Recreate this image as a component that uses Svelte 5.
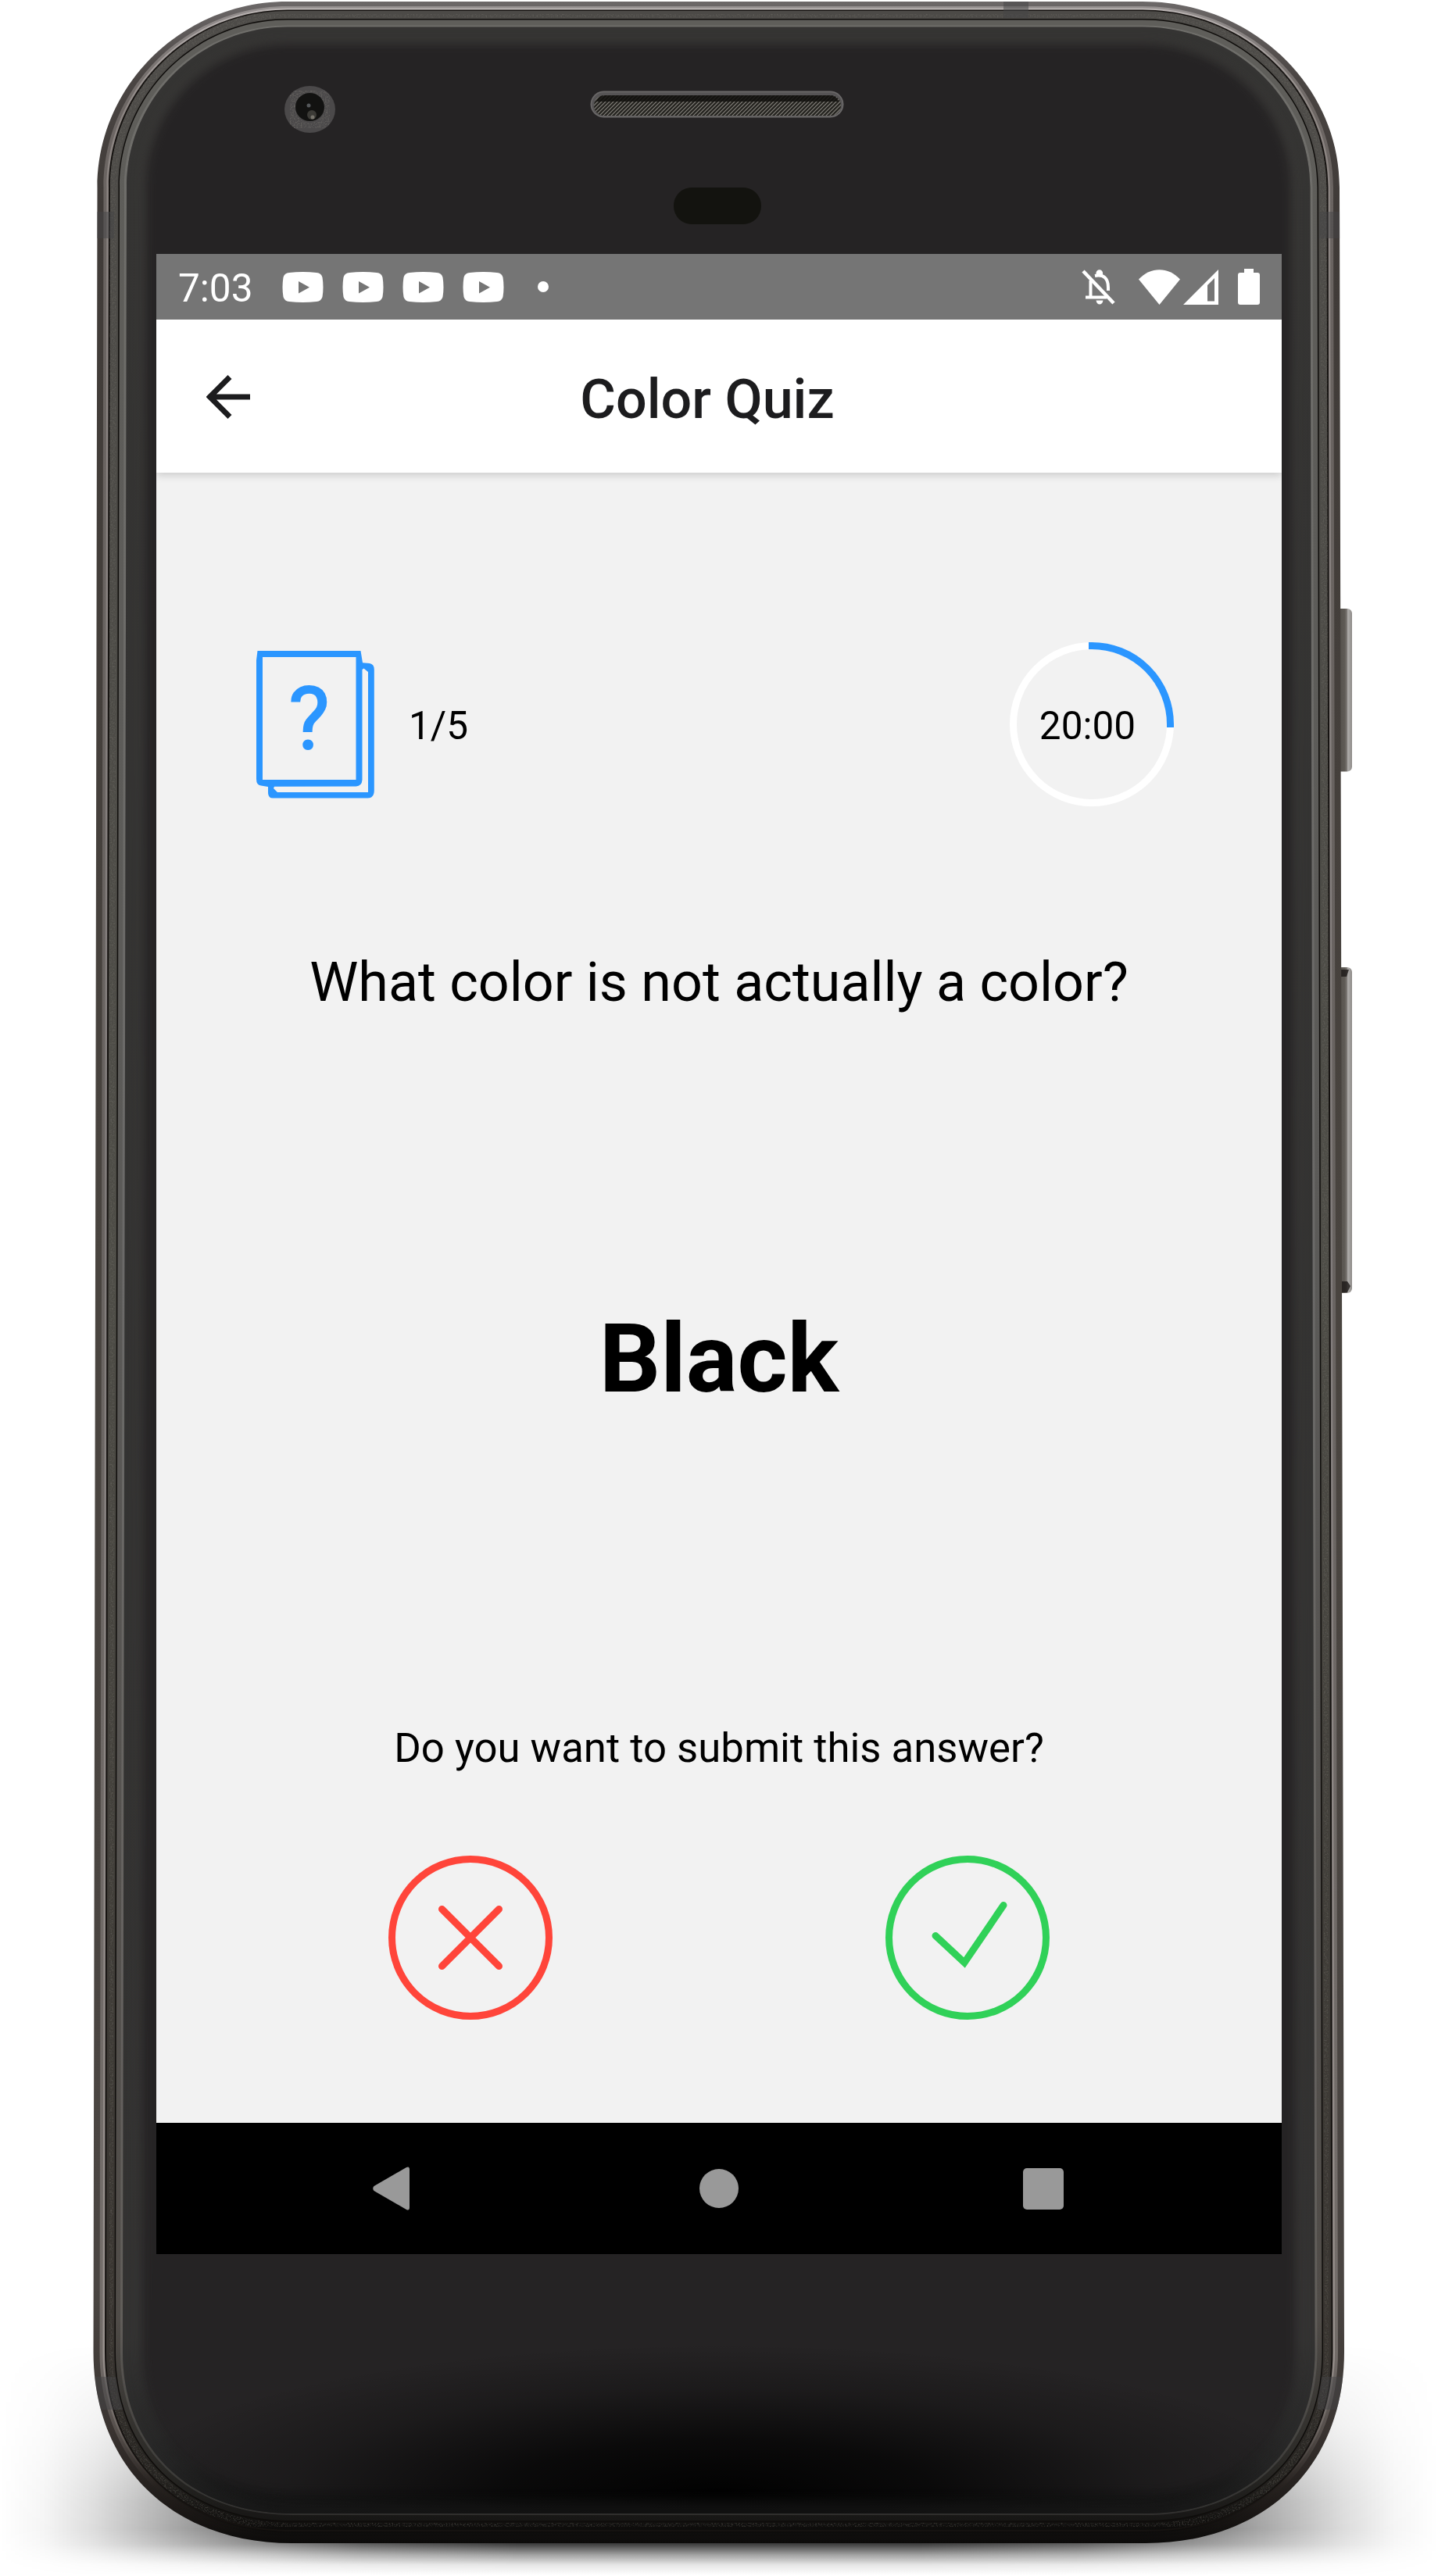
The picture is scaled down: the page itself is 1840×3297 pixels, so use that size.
<script>
  // Outline of the phone body, inset from the outer edge by the given amounts.
  // The body is slightly wider at the bottom than at the top.
  function body(side, top = side, bottom = side) {
    const xl = 124.5 + side, xr = 1714 - side;
    const bl = 119.5 + side, br = 1720 - side;
    const t = 2 + top, b = 3255 - bottom;
    const k = 0.552, q = 0.6;
    const L = 368, R = 1462, T = 240;
    const BL = 374, BR = 1466, B = 3010;
    return `M${L} ${t}H${R}C${R + (xr - R) * k} ${t} ${xr} ${T - (T - t) * k} ${xr} ${T}` +
      `L${br} ${B}C${br} ${B + (b - B) * q} ${BR + (br - BR) * q} ${b} ${BR} ${b}` +
      `H${BL}C${BL - (BL - bl) * q} ${b} ${bl} ${B + (b - B) * q} ${bl} ${B}` +
      `L${xl} ${T}C${xl} ${T - (T - t) * k} ${L - (L - xl) * k} ${t} ${L} ${t}Z`;
  }
  const notifications = [1, 2, 3, 4];
  const bands = [
    [120, 271, 26, 34], [1688, 271, 28, 34], [1284, 1, 32, 22],
    [118, 3042, 40, 42], [1686, 3042, 34, 42]
  ];
</script>

<div class="stage">
  <svg class="device" viewBox="0 0 1840 3297" aria-hidden="true">
    <defs>
      <linearGradient id="shX"><stop offset="0" stop-color="#000" stop-opacity="0" /><stop offset=".03" stop-opacity=".04" /><stop offset=".065" stop-opacity=".14" /><stop offset=".11" stop-opacity=".31" /><stop offset=".17" stop-opacity=".54" /><stop offset=".25" stop-opacity=".82" /><stop offset=".36" stop-opacity="1" /><stop offset=".64" stop-opacity="1" /><stop offset=".75" stop-opacity=".82" /><stop offset=".83" stop-opacity=".54" /><stop offset=".89" stop-opacity=".31" /><stop offset=".935" stop-opacity=".14" /><stop offset=".97" stop-opacity=".04" /><stop offset="1" stop-opacity="0" /></linearGradient>
      <linearGradient id="shY" x2="0" y2="1"><stop offset="0" stop-color="#fff" stop-opacity="0" /><stop offset=".35" stop-color="#fff" stop-opacity=".35" /><stop offset=".68" stop-color="#fff" stop-opacity=".9" /><stop offset=".8" stop-color="#fff" stop-opacity=".97" /><stop offset=".865" stop-color="#fff" stop-opacity=".76" /><stop offset=".91" stop-color="#fff" stop-opacity=".38" /><stop offset=".955" stop-color="#fff" stop-opacity=".1" /><stop offset="1" stop-color="#fff" stop-opacity="0" /></linearGradient>
      <mask id="shMask"><rect y="3000" width="1840" height="296" fill="url(#shY)" /></mask>
      <linearGradient id="metal" x2="0" y2="1"><stop offset="0" stop-color="#6c6868" /><stop offset=".03" stop-color="#4a4543" /><stop offset=".08" stop-color="#403b38" /><stop offset=".5" stop-color="#49443f" /><stop offset=".9" stop-color="#4a4542" /><stop offset=".955" stop-color="#3a3431" /><stop offset=".985" stop-color="#1e1a18" /><stop offset="1" stop-color="#0c0b0a" /></linearGradient>
      <linearGradient id="shine" x2="0" y2="1"><stop offset="0" stop-color="#b9b3b2" /><stop offset=".04" stop-color="#8c8582" /><stop offset=".5" stop-color="#827d7c" /><stop offset=".93" stop-color="#98918d" /><stop offset=".96" stop-color="#69625e" /><stop offset=".98" stop-color="#282320" /><stop offset="1" stop-color="#0c0b0a" /></linearGradient>
      <linearGradient id="grain" x2="0" y2="1"><stop offset="0" stop-color="#4c4a47" /><stop offset=".5" stop-color="#4d4c46" /><stop offset=".93" stop-color="#37332f" /><stop offset=".98" stop-color="#23211e" /><stop offset="1" stop-color="#0d0c0b" /></linearGradient>
      <linearGradient id="lip" x2="0" y2="1"><stop offset="0" stop-color="#5f5e5a" /><stop offset=".5" stop-color="#5b5a58" /><stop offset=".92" stop-color="#504c48" /><stop offset=".98" stop-color="#282724" /><stop offset="1" stop-color="#171615" /></linearGradient>
      <linearGradient id="glass" x2="0" y2="1"><stop offset="0" stop-color="#3a3937" /><stop offset=".93" stop-color="#373635" /><stop offset=".98" stop-color="#232323" /><stop offset="1" stop-color="#0f0f0f" /></linearGradient>
      <radialGradient id="dark"><stop offset="0" stop-color="#000" stop-opacity=".95" /><stop offset=".35" stop-color="#000" stop-opacity=".72" /><stop offset=".7" stop-color="#000" stop-opacity=".25" /><stop offset="1" stop-color="#000" stop-opacity="0" /></radialGradient>
      <linearGradient id="key"><stop offset="0" stop-color="#4b4843" /><stop offset=".6" stop-color="#5e5a55" /><stop offset=".72" stop-color="#77736f" /><stop offset=".78" stop-color="#b0aeac" /><stop offset="1" stop-color="#8d8a87" /></linearGradient>
      <pattern id="mesh" width="5" height="5" patternUnits="userSpaceOnUse"><rect width="5" height="5" fill="#24231f" /><path d="M-1 6L6 -1M-1 1L1 -1M4 6L6 4" stroke="#85827c" stroke-width="1.2" /></pattern>
      <filter id="soft" x="-5%" y="-5%" width="110%" height="110%" color-interpolation-filters="sRGB"><feGaussianBlur stdDeviation="7" /></filter>
      <filter id="noise" x="0" y="0" width="1" height="1" color-interpolation-filters="sRGB"><feTurbulence type="fractalNoise" baseFrequency=".55" numOctaves="2" seed="4" /><feColorMatrix values="0 0 0 0 .5  0 0 0 0 .49  0 0 0 0 .46  2.2 0 0 0 -.95" /><feComposite in2="SourceGraphic" operator="in" /></filter>
      <clipPath id="shell"><path d={body(0)} /></clipPath>
      <clipPath id="inner"><path d={body(37.5, 32.5, 38)} /></clipPath>
    </defs>

    <rect y="3000" width="1840" height="296" fill="url(#shX)" mask="url(#shMask)" />

    <rect x="1706" y="779" width="24" height="208.500" rx="6" fill="url(#key)" />
    <rect x="1706" y="1238" width="24" height="417" rx="6" fill="url(#key)" />
    <path d="M1714 1241h12l-3 9h-9zM1714 1640h10l4 6-4 8h-10z" fill="#1c1816" fill-opacity=".8" />

    <path d={body(0)} fill="url(#metal)" />
    <path d={body(8, 6, 9)} fill="url(#shine)" opacity=".55" />
    <path d={body(12, 8.5, 13.5)} fill="url(#shine)" />
    <path d={body(14.5, 10.500, 15)} fill="#151210" />
    <path d={body(16.5, 12, 17)} fill="url(#grain)" />
    <path d={body(20.500, 16, 21.500)} fill="none" stroke="#fff" stroke-width="9" filter="url(#noise)" opacity=".4" />
    <g clip-path="url(#shell)">
      {#each bands as [x, y, w, h]}
        <rect {x} {y} width={w} height={h} fill="#434346" fill-opacity=".5" />
      {/each}
    </g>
    <path d={body(27, 22, 27.500)} fill="#0f0d0b" />
    <path d={body(28.500, 23.5, 29)} fill="url(#lip)" />
    <path d={body(34.5, 30.500, 36)} fill="#fff" fill-opacity=".1" />
    <path d={body(37.5, 32.5, 38)} fill="url(#glass)" />
    <g clip-path="url(#inner)">
      <path d={body(62, 54, 62)} fill="#252324" filter="url(#soft)" />
      <ellipse cx="920" cy="3190" rx="780" ry="190" fill="url(#dark)" />
      <path d={body(38, 33, 39)} fill="none" stroke="#2c2c2b" stroke-opacity=".35" stroke-width="30" filter="url(#soft)" />
    </g>

    <ellipse cx="396.500" cy="140" rx="32.500" ry="30" fill="#4b494a" />
    <ellipse cx="396.500" cy="140" rx="25" ry="24" fill="none" stroke="#fff" stroke-width="14" filter="url(#noise)" opacity=".6" />
    <ellipse cx="396.500" cy="137" rx="18.500" ry="18" fill="#121211" />
    <circle cx="399" cy="147" r="6" fill="#3b3a36" /><circle cx="400" cy="150" r="2.500" fill="#77746c" />
    <circle cx="395" cy="135" r="2.500" fill="#55585b" />

    <rect x="755.5" y="116.500" width="324" height="34" rx="17" fill="#565455" />
    <rect x="756.5" y="117.500" width="322" height="32" rx="16" fill="none" stroke="#6b6969" stroke-width="1.500" />
    <rect x="760" y="122" width="316" height="26" rx="13" fill="url(#mesh)" />
    <path d="M763 130q4-8 11-8h288q8 0 11 8z" fill="#12110e" fill-opacity=".85" />
    <rect x="862" y="240" width="112" height="47" rx="23" fill="#13130f" />
  </svg>

  <div class="screen">
    <div class="status">
      <span class="clock">7:03</span>
      <div class="notes">
        {#each notifications as n (n)}
          <svg width="53" height="39" viewBox="0 0 53 39"><path fill="#fff" fill-rule="evenodd" d="M9 1Q26.500-1 44 1Q50 1.500 51.500 7Q53.500 19.500 51.500 32Q50 37.500 44 38Q26.500 39.800 9 38Q3 37.500 1.500 32Q-.5 19.500 1.500 7Q3 1.500 9 1ZM21 12V27.500L35 19.800Z" /></svg>
        {/each}
      </div>
      <span class="dot"></span>
      <svg class="bell" width="43" height="46" viewBox="0 0 43 46" fill="none" stroke="#fff">
        <path d="M2 3L41 44" stroke-width="4.500" />
        <path d="M11.500 15V36M5 36.500H32M17 9Q34 6 34 24V28" stroke-width="4" />
        <path d="M18.500 5.500a4.300 4.300 0 0 1 8.600 0v3h-8.600zM18.500 40.500h9q-1 5-4.500 5t-4.500-5z" fill="#fff" stroke="none" />
      </svg>
      <svg class="wifi" width="53" height="45" viewBox="0 0 53 45"><path d="M0 12.500C15-4 38-4 53 12.500L26.500 45Z" fill="#fff" /></svg>
      <svg class="signal" width="45" height="45" viewBox="0 0 45 45"><path d="M0 45L45 0V45ZM31 20V40.500H40V11Z" fill="#fff" fill-rule="evenodd" /></svg>
      <svg class="battery" width="28" height="46" viewBox="0 0 28 46"><path d="M8 0H20V5H25Q28 5 28 8V43Q28 46 25 46H3Q0 46 0 43V8Q0 5 3 5H8Z" fill="#fff" /></svg>
    </div>

    <header>
      <svg width="56" height="56" viewBox="0 0 56 56" fill="none" stroke="#1c1c1e" stroke-width="7"><path d="M30 2.500L4.500 28L30 53.500M5 28H56" /></svg>
      <h1>Color Quiz</h1>
    </header>

    <main>
      <div class="progress">
        <svg width="151" height="189" viewBox="0 0 151 189" fill="#2b96ff">
          <path fill-rule="evenodd" d="M1.500 0H133.500L136 15.200L145 16Q150.800 17 150.800 24V179Q150.800 188.500 142 188.500H21Q15 188.500 15 181V174L6 172.500Q0 172 0 164V12ZM8 8V165H127.500V8ZM135.500 24V165Q135 173 127.500 173.500L23 173.800L22 176L27 181H143V27L137.500 22.500Z" />
          <text x="67.500" y="125" text-anchor="middle">?</text>
        </svg>
        <span class="count">1/5</span>
        <div class="timer">
          <svg width="210" height="210" viewBox="0 0 210 210" fill="none" stroke-width="9">
            <circle cx="105" cy="105" r="100.500" stroke="#fff" />
            <path d="M101 4.500H105A100.500 100.500 0 0 1 205.500 105V109" stroke="#2b96ff" />
          </svg>
          <span>20:00</span>
        </div>
      </div>

      <p class="question">What color is not actually a color?</p>
      <p class="answer">Black</p>
      <p class="prompt">Do you want to submit this answer?</p>

      <div class="choices">
        <button aria-label="No"><svg width="210" height="210" viewBox="0 0 210 210" fill="none" stroke="#ff453a" stroke-width="9" stroke-linecap="round"><circle cx="105" cy="105" r="100.500" /><path d="M68.500 68.500L141.500 141.500M141.500 68.500L68.500 141.500" /></svg></button>
        <button aria-label="Yes"><svg width="210" height="210" viewBox="0 0 210 210" fill="none" stroke="#30d158" stroke-width="9" stroke-linecap="round"><circle cx="105" cy="105" r="100.500" /><path d="M64 102.500L101 137L151 63.500" /></svg></button>
      </div>
    </main>

    <nav>
      <svg width="48" height="56" viewBox="0 0 48 56"><path d="M43 1Q47 -1 47 4V52Q47 57 43 55L1.500 31Q-1 28 1.500 25Z" fill="#999" /></svg>
      <svg width="50" height="50" viewBox="0 0 50 50"><circle cx="25" cy="25" r="25" fill="#999" /></svg>
      <svg width="52" height="53" viewBox="0 0 52 53"><rect width="52" height="53" rx="5" fill="#999" /></svg>
    </nav>
  </div>
</div>

<style>
  :global(body) { background: #fff; }
  .stage { display: grid; width: 1840px; height: 3297px; overflow: hidden; font-family: Roboto, sans-serif; color: #000; }
  .device, .screen { grid-area: 1 / 1; }
  .device { display: block; width: 1840px; height: 3297px; }
  .screen { z-index: 1; display: flex; flex-direction: column; width: 1440px; height: 2560px; margin: 325px 0 0 200px; background: #f2f2f2; }
  svg { display: block; flex: none; }
  p, h1 { margin: 0; font-weight: 400; text-align: center; white-space: nowrap; }

  .status { display: flex; align-items: center; height: 84px; padding: 0 28px; background: #757575; color: #fff; }
  .clock { width: 95px; font-size: 49.500px; line-height: 84px; padding-top: 3px; }
  .notes { display: flex; gap: 24px; margin-left: 38px; }
  .dot { width: 14px; height: 14px; margin-left: 43px; border-radius: 50%; background: #fff; }
  .bell { margin-left: auto; }
  .wifi { margin-left: 30px; }
  .signal { margin-left: 4px; }
  .battery { margin-left: 25px; }

  header { z-index: 1; display: grid; grid-template-columns: 64px 1fr; align-items: center; height: 196px; background: #fff; color: #1c1c1e; box-shadow: 0 3px 10px rgba(0, 0, 0, .17); clip-path: inset(0 0 -24px 0); }
  header svg { margin-left: 64px; margin-top: 2px; }
  h1 { padding: 7px 94px 0 0; font-size: 70px; font-weight: 500; line-height: 80px; }

  main { height: 2112px; }
  .progress { display: flex; align-items: center; height: 210px; padding: 217px 138px 0 128px; }
  .count { margin: 4px 0 0 44px; font-size: 49.500px; }
  .timer { display: grid; margin-left: auto; place-items: center; }
  .timer svg, .timer span { grid-area: 1 / 1; }
  .timer span { padding: 3px 11px 0 0; font-size: 49.500px; }
  text { font: 400 111px Roboto, sans-serif; stroke: #2b96ff; stroke-width: 1.800px; }
  .question { margin-top: 185px; font-size: 70px; line-height: 80px; }
  .answer { margin-top: 372px; font-size: 123px; font-weight: 700; line-height: 140px; }
  .prompt { margin-top: 398px; font-size: 52.700px; line-height: 60px; }
  .choices { display: flex; justify-content: space-between; margin-top: 108px; padding: 0 297px; }
  button { padding: 0; border: 0; background: none; }

  nav { display: flex; align-items: center; gap: 370px; height: 168px; padding-left: 277px; background: #000; }
  nav svg:last-child { margin-left: -6px; }
</style>
